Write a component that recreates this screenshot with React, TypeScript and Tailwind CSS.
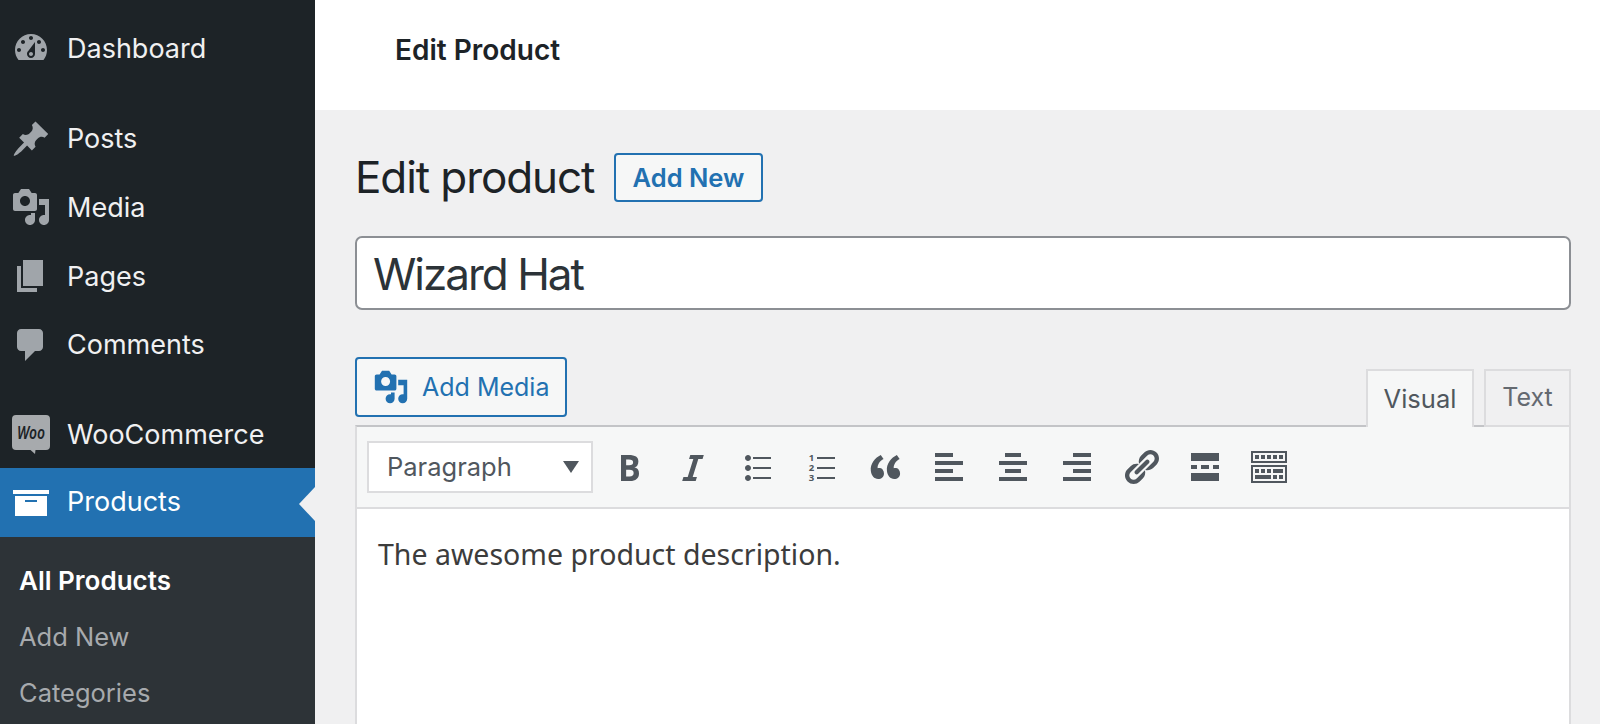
import type { ReactNode } from "react";

const icons = {
  dashboard:
    "M3.76 16h12.48c1.1-1.37 1.76-3.11 1.76-5 0-4.42-3.58-8-8-8s-8 3.58-8 8c0 1.89.66 3.63 1.76 5zM10 4c.55 0 1 .45 1 1s-.45 1-1 1-1-.45-1-1 .45-1 1-1zM6 6c.55 0 1 .45 1 1s-.45 1-1 1-1-.45-1-1 .45-1 1-1zm8 0c.55 0 1 .45 1 1s-.45 1-1 1-1-.45-1-1 .45-1 1-1zm-5.37 5.55L12 7v6c0 1.1-.9 2-2 2s-2-.9-2-2c0-.57.24-1.08.63-1.45zM4 10c.55 0 1 .45 1 1s-.45 1-1 1-1-.45-1-1 .45-1 1-1zm12 0c.55 0 1 .45 1 1s-.45 1-1 1-1-.45-1-1 .45-1 1-1zm-5 3c0-.55-.45-1-1-1s-1 .45-1 1 .45 1 1 1 1-.45 1-1z",
  pin: "M10.44 3.02l1.82-1.82 6.36 6.35-1.83 1.82c-1.05-.68-2.48-.57-3.41.36l-.75.75c-.92.93-1.04 2.35-.35 3.41l-1.83 1.82-2.41-2.41-2.8 2.79c-.42.42-3.38 2.71-3.8 2.29s1.86-3.39 2.28-3.81l2.79-2.79L4.1 9.36l1.83-1.82c1.05.69 2.48.57 3.41-.36l.75-.75c.93-.92 1.04-2.35.35-3.41z",
  media:
    "M13 11V4c0-.55-.45-1-1-1h-1.67L9 1H5L3.67 3H2c-.55 0-1 .45-1 1v7c0 .55.45 1 1 1h10c.55 0 1-.45 1-1zM7 4.5c1.38 0 2.5 1.12 2.5 2.5S8.38 9.5 7 9.5 4.5 8.38 4.5 7 5.62 4.5 7 4.5zM14 6h5v10.5c0 1.38-1.12 2.5-2.5 2.5S14 17.88 14 16.5s1.12-2.5 2.5-2.5c.17 0 .34.02.5.05V9h-3V6zm-4 8.05V13h2v3.5c0 1.38-1.12 2.5-2.5 2.5S7 17.88 7 16.5 8.12 14 9.5 14c.17 0 .34.02.5.05z",
  page: "M6 15V2h10v13H6zm-1 1h8v2H3V5h2v11z",
  comment: "M5 2h9c1.1 0 2 .9 2 2v7c0 1.1-.9 2-2 2h-2l-5 5v-5H5c-1.1 0-2-.9-2-2V4c0-1.1.9-2 2-2z",
  archive: "M19 4v2H1V4h18zM2 7h16v10H2V7zm11 3V9H7v1h6z",
  bold: "M6 4v13h4.54c1.37 0 2.46-.33 3.26-1 .8-.66 1.2-1.58 1.2-2.77 0-.84-.17-1.51-.51-2.01s-.9-.85-1.67-1.03v-.09c.57-.1 1.02-.4 1.36-.9s.51-1.13.51-1.91c0-1.14-.39-1.98-1.17-2.5C12.75 4.26 11.5 4 9.78 4H6zm2.57 5.15V6.26h1.36c.73 0 1.27.11 1.61.32.34.22.51.58.51 1.07 0 .54-.16.92-.47 1.15s-.82.35-1.51.35h-1.5zm0 2.19h1.6c1.44 0 2.16.53 2.16 1.61 0 .6-.17 1.05-.51 1.34s-.86.43-1.57.43H8.57v-3.38z",
  italic: "M14.78 6h-2.13l-2.8 9h2.12l-.62 2H4.6l.62-2h2.14l2.8-9H8.03l.62-2h6.75z",
  ul: "M5.5 7C4.67 7 4 6.33 4 5.5 4 4.68 4.67 4 5.5 4 6.32 4 7 4.68 7 5.5 7 6.33 6.32 7 5.5 7zM8 5h9v1H8V5zm-2.5 7c-.83 0-1.5-.67-1.5-1.5C4 9.68 4.67 9 5.5 9c.82 0 1.5.68 1.5 1.5 0 .83-.68 1.5-1.5 1.5zM8 10h9v1H8v-1zm-2.5 7c-.83 0-1.5-.67-1.5-1.5 0-.82.67-1.5 1.5-1.5.82 0 1.5.68 1.5 1.5 0 .83-.68 1.5-1.5 1.5zM8 15h9v1H8v-1z",
  quote:
    "M9.49 13.22c0-.74-.2-1.38-.61-1.9-.62-.78-1.83-.88-2.53-.72-.29-1.65 1.11-3.75 2.92-4.65L7.88 4c-2.73 1.3-5.42 4.28-4.96 8.05C3.21 14.43 4.59 16 6.54 16c.85 0 1.56-.25 2.12-.75s.83-1.18.83-2.03zm8.05 0c0-.74-.2-1.38-.61-1.9-.63-.78-1.83-.88-2.53-.72-.29-1.65 1.11-3.75 2.92-4.65L15.93 4c-2.73 1.3-5.41 4.28-4.96 8.05.29 2.38 1.66 3.95 3.61 3.95.85 0 1.56-.25 2.12-.75s.84-1.18.84-2.03z",
  alignLeft: "M12 5V3H3v2h9zm5 4V7H3v2h14zm-5 4v-2H3v2h9zm5 4v-2H3v2h14z",
  alignCenter: "M14 5V3H6v2h8zm3 4V7H3v2h14zm-3 4v-2H6v2h8zm3 4v-2H3v2h14z",
  alignRight: "M17 5V3H8v2h9zm0 4V7H3v2h14zm0 4v-2H8v2h9zm0 4v-2H3v2h14z",
  link: "M17.74 2.76c1.68 1.69 1.68 4.41 0 6.1l-1.53 1.52c-1.12 1.12-2.7 1.47-4.14 1.09l2.62-2.61.76-.77.76-.76c.84-.84.84-2.2 0-3.04-.84-.85-2.2-.85-3.04 0l-.77.76-3.38 3.38c-.37-1.44-.02-3.02 1.1-4.14l1.52-1.53c1.69-1.68 4.42-1.68 6.1 0zM8.59 13.43l5.34-5.34c.42-.42.42-1.1 0-1.52-.44-.43-1.13-.39-1.53 0l-5.33 5.34c-.42.42-.42 1.1 0 1.52.44.43 1.13.39 1.52 0zm-.76 2.29l4.14-4.15c.38 1.44.03 3.02-1.09 4.14l-1.52 1.53c-1.69 1.68-4.41 1.68-6.1 0-1.68-1.68-1.68-4.42 0-6.1l1.53-1.52c1.12-1.12 2.7-1.47 4.14-1.1l-4.14 4.15c-.85.84-.85 2.2 0 3.05.84.84 2.2.84 3.04 0z",
  more: "M3 7h14V3H3v4zM3 17h14v-4H3v4zM3 11h3V9H3v2zM8 11h4V9H8v2zM14 11h3V9h-3v2z",
  kitchen:
    "M1 2h18v6H1V2zm1 1v4h16V3H2zM3 4h2v2H3V4zm3 0h2v2H6V4zm3 0h2v2H9V4zm3 0h2v2h-2V4zm3 0h2v2h-2V4zM1 9h18v9H1V9zm1 1v7h16v-7H2zM3 11h2v2H3v-2zm3 0h2v2H6v-2zm3 0h2v2H9v-2zm3 0h5v2h-5v-2zM3 14h8v2H3v-2zm9 0h2v2h-2v-2zm3 0h2v2h-2v-2z",
};

function Dashicon({ d, size = 40, className }: { d: string; size?: number; className?: string }) {
  return (
    <svg viewBox="0 0 20 20" width={size} height={size} fill="currentColor" fillRule="evenodd" className={className}>
      <path d={d} />
    </svg>
  );
}

function WooIcon() {
  return (
    <svg viewBox="0 0 38 39" width={38} height={39}>
      <path d="M4 0h30a4 4 0 0 1 4 4v27a4 4 0 0 1-4 4H23.5l-.5 4-4.5-4H4a4 4 0 0 1-4-4V4a4 4 0 0 1 4-4z" fill="#a7aaad" />
      <text
        x="5"
        y="23.5"
        textLength="28"
        lengthAdjust="spacingAndGlyphs"
        fontFamily="'Noto Sans', sans-serif"
        fontSize="17"
        fontWeight="600"
        fontStyle="italic"
        fill="#1d2327"
      >
        Woo
      </text>
    </svg>
  );
}

function NumberedList() {
  return (
    <svg viewBox="0 0 20 20" width={40} height={40} fill="#50575e">
      <rect x="8" y="5" width="9" height="1" />
      <rect x="8" y="10" width="9" height="1" />
      <rect x="8" y="15" width="9" height="1" />
      <g fontFamily="'Noto Sans', sans-serif" fontSize="4.8" fontWeight="700" textAnchor="middle">
        <text x="5.2" y="7">1</text>
        <text x="5.2" y="12">2</text>
        <text x="5.2" y="17">3</text>
      </g>
    </svg>
  );
}

function MenuItem({
  icon,
  label,
  active,
  className,
}: {
  icon: ReactNode;
  label: string;
  active?: boolean;
  className: string;
}) {
  return (
    <div className={`relative flex items-center ${className} ${active ? "bg-[#2271b1] text-white" : "text-[#f0f0f1]"}`}>
      <div className={`ml-[11px] mr-[16px] flex w-[40px] justify-center ${active ? "text-white" : "text-[#a0a5aa]"}`}>
        {icon}
      </div>
      <span className="text-[27px] leading-none">{label}</span>
      {active && (
        <div className="absolute right-0 top-[19px] h-0 w-0 border-y-[17px] border-r-[16px] border-y-transparent border-r-[#f0f0f1]" />
      )}
    </div>
  );
}

function Sidebar() {
  return (
    <aside className="flex h-full w-[315px] shrink-0 flex-col bg-[#1d2327] pt-[14px]">
      <MenuItem className="h-[68.6px]" icon={<Dashicon d={icons.dashboard} />} label="Dashboard" />
      <div className="h-[22px]" />
      <MenuItem className="h-[68.6px]" icon={<Dashicon d={icons.pin} />} label="Posts" />
      <MenuItem className="h-[68.6px]" icon={<Dashicon d={icons.media} />} label="Media" />
      <MenuItem className="h-[68.6px]" icon={<Dashicon d={icons.page} />} label="Pages" />
      <MenuItem className="h-[68.6px]" icon={<Dashicon d={icons.comment} />} label="Comments" />
      <div className="h-[22px]" />
      <MenuItem className="h-[67px]" icon={<WooIcon />} label="WooCommerce" />
      <MenuItem className="h-[69px] pb-[1px]" icon={<Dashicon d={icons.archive} />} label="Products" active />
      <div className="flex flex-1 flex-col bg-[#2d3337] pl-[19px] pt-[15px] text-[25.5px]">
        <div className="flex h-[56.5px] items-center text-[26px] font-semibold text-white">All Products</div>
        <div className="flex h-[56.5px] items-center text-[#a7aaad]">Add New</div>
        <div className="flex h-[56.5px] items-center text-[#a7aaad]">Categories</div>
      </div>
    </aside>
  );
}

function Toolbar() {
  return (
    <div className="flex h-[84px] shrink-0 items-start border-x-2 border-t-2 border-b-2 border-x-[#dcdcde] border-t-[#c3c4c7] border-b-[#dcdcde] bg-[#f6f7f7] pl-[10px] pt-[14px]">
      <div className="flex h-[52px] w-[226px] items-center justify-between border-2 border-[#dcdcde] bg-white pl-[18px] pr-[12px] text-[25.5px] text-[#50575e]">
        <span className="pt-[1px]">Paragraph</span>
        <div className="h-0 w-0 border-x-[8px] border-t-[12px] border-x-transparent border-t-[#50575e]" />
      </div>
      <div className="ml-[16px] mt-[6px] flex gap-[24px] text-[#50575e]">
        <Dashicon d={icons.bold} />
        <Dashicon d={icons.italic} />
        <Dashicon d={icons.ul} />
        <NumberedList />
        <Dashicon d={icons.quote} />
        <Dashicon d={icons.alignLeft} />
        <Dashicon d={icons.alignCenter} />
        <Dashicon d={icons.alignRight} />
        <Dashicon d={icons.link} />
        <Dashicon d={icons.more} />
        <Dashicon d={icons.kitchen} />
      </div>
    </div>
  );
}

export default function App() {
  return (
    <div className="flex h-screen overflow-hidden font-['Inter',sans-serif]">
      <Sidebar />
      <main className="flex min-w-0 flex-1 flex-col bg-[#f0f0f1]">
        <header className="flex h-[110px] shrink-0 items-center bg-white pb-[10px] pl-[80px] text-[28px] font-semibold text-[#1d2327]">
          Edit Product
        </header>
        <div className="flex min-h-0 flex-1 flex-col pl-[40px] pr-[29px] pt-[43px]">
          <div className="flex h-[49px] shrink-0 items-center">
            <h1 className="w-[259px] pb-[2px] text-[44px] leading-none tracking-[-1.1px] text-[#1d2327]">Edit product</h1>
            <button className="flex h-[49px] w-[149px] items-center justify-center rounded-[4px] border-2 border-[#2271b1] bg-[#f6f7f7] pt-[2px] text-[25.5px] font-semibold text-[#2271b1]">
              Add New
            </button>
          </div>
          <div className="mt-[34px] flex h-[74px] shrink-0 items-center rounded-[7px] border-2 border-[#8c8f94] bg-white pl-[16px] pt-[1px] text-[44px] tracking-[-2px] text-[#2c3338]">
            Wizard Hat
          </div>
          <div className="mt-[47px] flex h-[68px] shrink-0 items-start justify-between">
            <button className="flex h-[60px] w-[212px] items-center rounded-[4px] border-2 border-[#2271b1] bg-[#f6f7f7] pl-[16px] text-[25px] text-[#2271b1]">
              <Dashicon d={icons.media} size={36} />
              <span className="ml-[13px] pt-[2px]">Add Media</span>
            </button>
            <div className="relative z-10 mt-[12px] flex h-[58px] items-start gap-[10px] text-[25px]">
              <div className="flex h-[58px] w-[108px] items-center justify-center border-x-2 border-t-2 border-[#dcdcde] bg-[#f6f7f7] text-[25.5px] text-[#50575e]">
                Visual
              </div>
              <div className="flex h-[58px] w-[87px] items-center justify-center border-2 border-[#dcdcde] bg-[#f0f0f1] text-[#646970]">
                Text
              </div>
            </div>
          </div>
          <Toolbar />
          <div className="flex-1 border-x-2 border-[#dcdcde] bg-white pl-[21px] pt-[25px] font-['Noto_Sans',sans-serif] text-[28.5px] leading-[40px] text-[#3c3c3c]">
            The awesome product description.
          </div>
        </div>
      </main>
    </div>
  );
}
